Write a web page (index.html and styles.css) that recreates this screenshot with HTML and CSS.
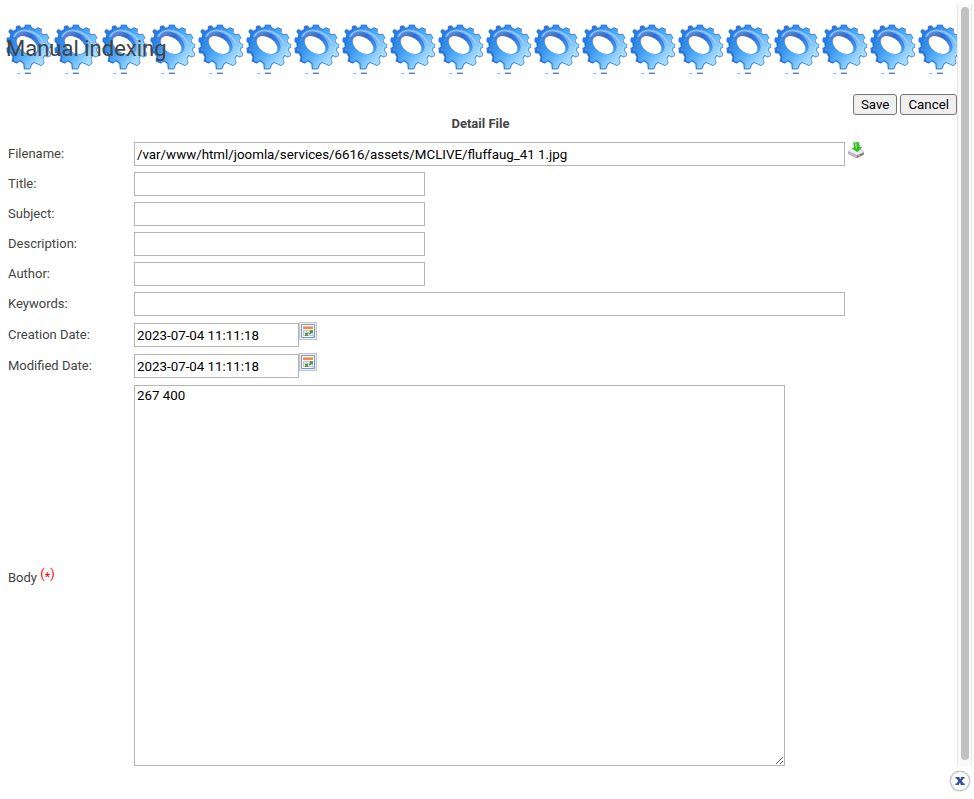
FILE: index.html
```
<!DOCTYPE html>
<html lang="en">
<head>
<meta charset="utf-8">
<title>Manual indexing</title>
<link rel="stylesheet" href="styles.css">
</head>
<body>
<div class="window">
  <main class="content">
    <header class="banner">
      <svg class="gears" aria-hidden="true">
        <defs>
          <linearGradient id="body" x1="0" y1="0.35" x2="0.7" y2="0.9">
            <stop offset="0" stop-color="#2a7fe2"/>
            <stop offset="0.35" stop-color="#4098f0"/>
            <stop offset="0.65" stop-color="#63b6fa"/>
            <stop offset="1" stop-color="#a6dcff"/>
          </linearGradient>
          <linearGradient id="inner" x1="0" y1="0" x2="1" y2="0.3">
            <stop offset="0" stop-color="#7d9ad6"/>
            <stop offset="0.4" stop-color="#3268c8"/>
            <stop offset="1" stop-color="#4a98f0"/>
          </linearGradient>
          <pattern id="gear" width="48" height="48" patternUnits="userSpaceOnUse">
            <path fill="#1e74dc" stroke="#8a9fc0" stroke-width=".4" stroke-linejoin="round" d="M10 2.3 13.3 1.3 15.5 3.7 18 3.3 19.3.7 24.6.7 26 3.7 29.3 5 32 3.3 36 5.3 35.3 8.7 37.3 10.3 40.7 9.7 43.3 13.7 41.3 16 42.3 18.7 45 20.3 45 23.8 42.6 24.5 42.8 26.3 44.9 29.5 44.3 32.3 41.3 33.3 39 32 37.3 34.2 38.3 39.2 35 42 30.5 39.7 28.3 39 26 40.5 24.2 45.3 18 45.3 17.3 39.8 14 37.5 10.8 39.6 5.7 37.4 6.5 32.9 4.6 29.5 1 29 .6 24 2.9 22.7 2.3 19.2.6 17.4.8 13.7 3.7 13.3 4.3 10.3 2.3 7.7 4.2 5 7.5 6.8 10 5Z"/>
            <path fill="url(#body)" d="M11 2.7 13 2 15.2 4.6 18.8 4 20.1 1.3 24 1.3 25.7 4.5 29.4 5.7 32 4 35.2 5.8 34.7 9 37 10.9 40.3 10.3 42.5 13.8 40.7 16 41.8 19 44.4 20.6 44.4 23.3 41.9 24 42.3 26.7 44.3 29.8 43.7 31.9 41.3 32.6 38.6 31 36.7 33.8 37.7 38.9 34.9 41.2 30.7 38.9 28 38.2 25.3 39.9 23.6 44.6 19 44.6 18.2 38.9 14.2 36.1 11.5 38 7.8 36.4 8.4 32 6 28 3 27 2.6 24.5 4.8 23 4 18.5 2 16.7 2.2 14.5 5.2 14.2 6.2 10.8 4.2 8 5 6.2 8 8 11.2 6Z"/>
            <path d="M8 13C10 8 16 5.5 23 7S36 14 38 20" fill="none" stroke="#9dd3ff" stroke-width="2" opacity=".75"/>
            <ellipse cx="22" cy="19" rx="14" ry="9.500" transform="rotate(38 22 19)" fill="url(#inner)"/>
            <ellipse cx="21" cy="21" rx="11.600" ry="7.400" transform="rotate(36 21 21)" fill="#fff"/>
          </pattern>
        </defs>
        <rect width="100%" height="50" fill="url(#gear)"/>
      </svg>
      <h1 class="heading">Manual indexing</h1>
    </header>

    <form class="form">
      <div class="actions">
        <button class="button" type="submit">Save</button>
        <button class="button" type="button">Cancel</button>
      </div>
      <h2 class="subtitle">Detail File</h2>
      <div class="row">
        <label for="filename">Filename:</label>
        <div class="field">
          <input class="wide" id="filename" type="text" value="/var/www/html/joomla/services/6616/assets/MCLIVE/fluffaug_41 1.jpg">
          <a class="download" href="#" aria-label="Download">
            <svg width="16" height="16" viewBox="0 0 16 16">
              <path d="M0 9.5 5 6h6l5 4v2.500L10 16H8L0 12Z" fill="#a5a2b2"/>
              <path d="M.5 9.5 5 6.500h6l4.500 3.700L9 13Z" fill="#efedf5"/>
              <path d="M.5 10.2 8.500 13.500v1.700L.5 11.800Z" fill="#c5c1d2"/>
              <path d="m9 13.700 6.500-2.800v1.400L9 15.300Z" fill="#6d6975"/>
              <path d="m9.800 14 2.200-1" stroke="#e2c23b"/>
              <path d="M5.500.8 10.800.3 11.500 5 14 5.200 9.500 10 4 6.200 6.300 5.800Z" fill="#35bd22" stroke="#3fae30" stroke-width=".5"/>
              <path d="m6.400 1.500 2-.2.800 5-1 .1Z" fill="#86e968"/>
            </svg>
          </a>
        </div>
      </div>
      <div class="row">
        <label for="title">Title:</label>
        <div class="field"><input class="medium" id="title" type="text"></div>
      </div>
      <div class="row">
        <label for="subject">Subject:</label>
        <div class="field"><input class="medium" id="subject" type="text"></div>
      </div>
      <div class="row">
        <label for="description">Description:</label>
        <div class="field"><input class="medium" id="description" type="text"></div>
      </div>
      <div class="row">
        <label for="author">Author:</label>
        <div class="field"><input class="medium" id="author" type="text"></div>
      </div>
      <div class="row">
        <label for="keywords">Keywords:</label>
        <div class="field"><input class="wide" id="keywords" type="text"></div>
      </div>
      <div class="row date-row">
        <label for="created">Creation Date:</label>
        <div class="field">
          <input class="date" id="created" type="text" value="2023-07-04 11:11:18">
          <button class="calendar" type="button" aria-label="Pick creation date">
            <svg width="16" height="16" viewBox="0 0 16 16">
              <g id="cal">
                <path d="M1.500 1.500h13v13h-13z" fill="#fff" stroke="#6c9bd6"/>
                <path d="M3 3h10v3H3z" fill="#f58a4b"/>
                <path d="M3 3h10v1H3z" fill="#ffad78"/>
                <path d="M3 7h10v6H3z" fill="#c3c3cd"/>
                <path d="M4 8h2v1H4zM7 8h2v1H7zM4 10h1v2H4zM8 11h1v1H8zM10 11h2v1h-2z" fill="#fff"/>
                <path d="M10 7h3v3h-3zM5 10h3v3H5zM9 10h2v1H9z" fill="#559a50"/>
                <path d="m11 14 3-3v3Z" fill="#c6dcf5"/>
              </g>
            </svg>
          </button>
        </div>
      </div>
      <div class="row date-row">
        <label for="modified">Modified Date:</label>
        <div class="field">
          <input class="date" id="modified" type="text" value="2023-07-04 11:11:18">
          <button class="calendar" type="button" aria-label="Pick modified date">
            <svg width="16" height="16" viewBox="0 0 16 16"><use href="#cal"/></svg>
          </button>
        </div>
      </div>
      <div class="row body-row">
        <label for="text">Body <span class="required">(<small>*</small>)</span></label>
        <div class="field"><textarea id="text">267 400</textarea></div>
      </div>
    </form>
  </main>
  <div class="scrollbar"><div class="thumb"></div></div>
</div>
<footer class="footer">
  <button class="close" type="button" aria-label="Close">
    <svg width="22" height="22" viewBox="0 0 22 22">
      <circle cx="11" cy="11" r="9.8" fill="#fff" stroke="#c9c9c9" stroke-width="1.5"/>
      <path d="M6.500 7h4v1l.7 1.200.8-1.200V7h3.500v1.500h-1L12.700 11l2 2.500h1V15h-4v-1l-.8-1.200-.9 1.200v1H6.500v-1.500h1L9.400 11 7.500 8.500h-1Z" fill="#2c5192"/>
    </svg>
  </button>
</footer>
</body>
</html>
```

FILE: styles.css
```
* {
  box-sizing: border-box;
}

body {
  margin: 0;
  background: #fff;
  color: #444;
  font-family: Roboto, "Liberation Sans", sans-serif;
  font-size: 13px;
  line-height: 16px;
}

.window {
  display: flex;
  padding: 4px 2px 0 6px;
}

.content {
  flex: 1;
  min-width: 0;
  padding-top: 20px;
}

.banner {
  display: grid;
  height: 50px;
}

.gears,
.heading {
  grid-area: 1 / 1;
}

.gears {
  display: block;
  width: 100%;
  height: 50px;
}

.heading {
  z-index: 1;
  align-self: center;
  margin: 0;
  font-size: 22px;
  font-weight: 400;
  line-height: 50px;
}

.form {
  padding: 20px 0 0 2px;
}

.actions {
  display: flex;
  justify-content: flex-end;
  gap: 3px;
}

.button {
  height: 21px;
  padding: 0 7px;
  border: 1px solid #767676;
  border-radius: 3px;
  background: #efefef;
  color: #000;
  font-family: inherit;
}

.subtitle {
  margin: 0 0 9px;
  padding-right: 4px;
  font-size: 13px;
  font-weight: 700;
  line-height: 18px;
  text-align: center;
}

.row {
  display: grid;
  grid-template-columns: 126px 1fr;
  align-items: center;
  min-height: 24px;
  margin-bottom: 6px;
}

.field {
  display: flex;
  gap: 3px;
}

input,
textarea {
  height: 24px;
  padding: 1px 2px;
  border: 1px solid #b5b5b5;
  border-radius: 0;
  background: #fff;
  color: #000;
  font-family: inherit;
}

.wide {
  width: 100%;
  max-width: 711px;
}

.medium {
  width: 100%;
  max-width: 291px;
}

.date {
  width: 165px;
}

.download,
.calendar svg {
  display: block;
}

.download {
  height: 16px;
}

.date-row {
  min-height: 25px;
}

.date-row .field {
  gap: 0;
  align-items: flex-start;
}

.date-row .date {
  margin-top: 1px;
}

.calendar {
  padding: 0;
  border: 1px solid #c4c4c4;
  background: #eee;
}

.body-row {
  margin-bottom: 0;
  padding-top: 1px;
}

textarea {
  width: 100%;
  max-width: 651px;
  height: 381px;
  line-height: 17px;
}

.required {
  color: #f00;
  vertical-align: 4px;
}

.required small {
  font-size: 13px;
  vertical-align: -3px;
}

.scrollbar {
  width: 15px;
  padding: 3px;
  border: solid #e8e8e8;
  border-width: 0 1px;
  background: #fafafa;
}

.thumb {
  width: 8px;
  height: calc(100% - 3px);
  border-radius: 4px;
  background: #c1c1c1;
}

.footer {
  display: flex;
  justify-content: flex-end;
  padding: 4px 3px 0;
}

.close {
  padding: 0;
  border: 0;
  background: none;
}
```
